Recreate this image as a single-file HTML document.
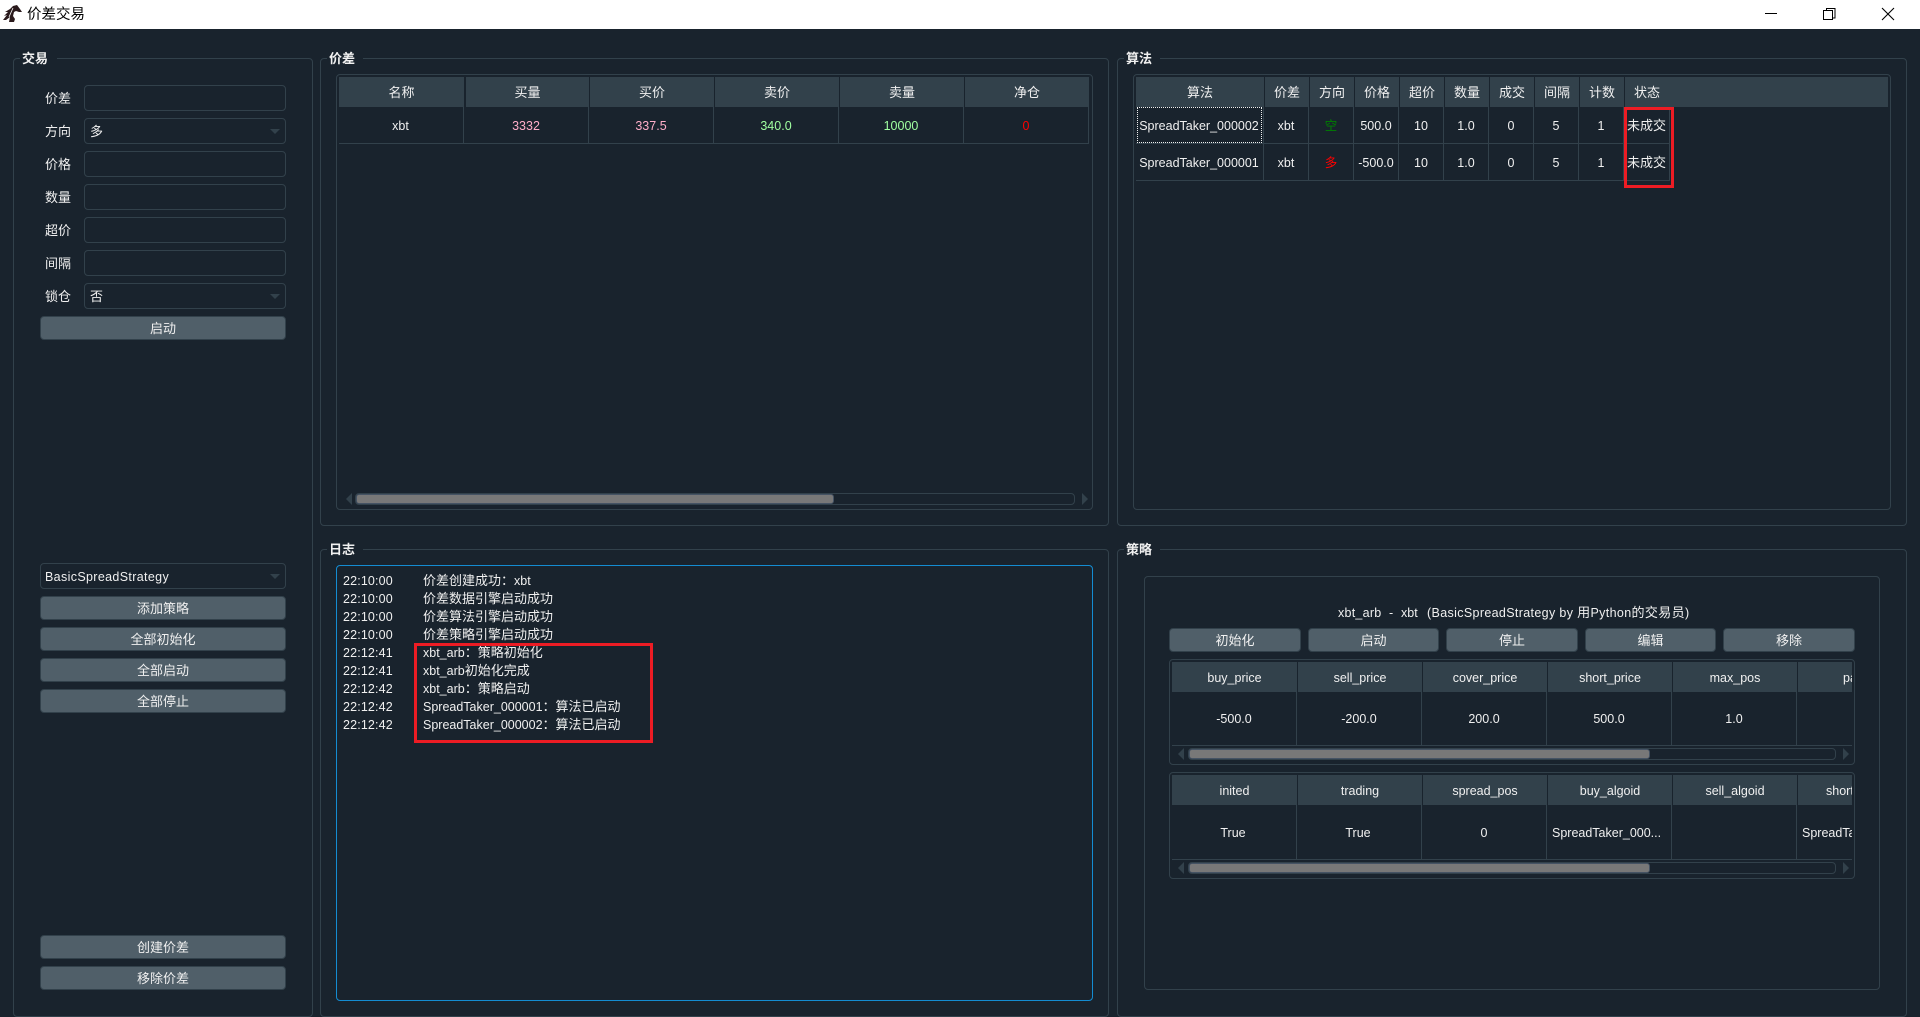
<!DOCTYPE html>
<html lang="zh-CN">
<head>
<meta charset="utf-8">
<title>价差交易</title>
<style>
*{box-sizing:border-box;margin:0;padding:0}
html,body{width:1920px;height:1017px;overflow:hidden;background:#19232D}
body{position:relative;font-family:"Liberation Sans","Noto Sans CJK SC",sans-serif;font-size:12.5px;color:#F0F0F0}
div{position:absolute}
em{font-style:normal;font-size:13px}
.bar{left:0;top:0;width:1920px;height:29px;background:#fff}
.wt{left:27px;top:5px;font-size:14.5px;line-height:21px;color:#000;white-space:nowrap}
.g{border:1px solid #32414B;border-radius:4px}
.gt{height:18px;line-height:20px;background:#19232D;font-weight:bold;font-size:13px;text-align:left;padding-left:2px;white-space:nowrap}
.f{border:1px solid #32414B;border-radius:4px}
.i{left:84px;width:202px;height:26px;border:1px solid #32414B;border-radius:4px;line-height:26px;padding-left:5px;font-size:13px}
.l{left:45px;height:26px;line-height:28px;white-space:nowrap;font-size:13px}
.a{width:0;height:0;border-left:5px solid transparent;border-right:5px solid transparent;border-top:5px solid #32414B}
.b{background:#505F69;border:1px solid #32414B;border-radius:4px;text-align:center;white-space:nowrap;font-size:13px;line-height:24px!important}
.h{background:#32414B;text-align:center;height:30px;line-height:32px;white-space:nowrap;overflow:hidden}
.k{font-size:13px}
.c{text-align:center;line-height:22px;height:22px;white-space:nowrap;overflow:hidden}
.v{width:1px;background:#32414B}
.o{height:1px;background:#32414B}
.st{border:1px solid #32414B;border-radius:4px}
.th{background:#787878;border:1px solid #455364;border-radius:3px}
.al{width:0;height:0;border-top:6px solid transparent;border-bottom:6px solid transparent;border-right:6px solid #32414B}
.ar{width:0;height:0;border-top:6px solid transparent;border-bottom:6px solid transparent;border-left:6px solid #32414B}
.lg{height:18px;line-height:20px;white-space:nowrap}
.lt{letter-spacing:.15px}
.red{border:3px solid #ED1C24;background:transparent}
</style>
</head>
<body>
<div class="bar"></div>
<svg style="position:absolute;left:0;top:3px" width="24" height="20" viewBox="0 0 24 20"><path d="M3 17 L7 12 L4 13 L8 9 L5 9 L10 6 L13 3 L17 2 L20 6 L22 9 L19 9 L16 8 L14 9 L13 13 L15 16 L14 19 L9 19 L10 14 L6 17 Z" fill="#2a1a1c"/><path d="M9 14 L13 5" stroke="#fff" stroke-width=".8" fill="none"/></svg>
<div class="wt">价差交易</div>
<svg style="position:absolute;left:1760px;top:4px" width="140" height="22" viewBox="0 0 140 22" fill="none" stroke="#000" stroke-width="1"><path d="M5 9.500H17"/><path d="M63.500 6.500h9v9h-9z M66.500 6.500v-2h8.500v9.500h-2.500"/><path d="M122 4L134 16M134 4L122 16" stroke-width="1.100"/></svg>

<!-- 交易 -->
<div class="g" style="left:13px;top:58px;width:300px;height:959px"></div>
<div class="gt" style="left:20px;top:49px;width:37px">交易</div>
<div class="l" style="top:85px">价差</div><div class="i" style="top:85px"></div>
<div class="l" style="top:118px">方向</div><div class="i" style="top:118px">多</div><div class="a" style="left:270px;top:129px"></div>
<div class="l" style="top:151px">价格</div><div class="i" style="top:151px"></div>
<div class="l" style="top:184px">数量</div><div class="i" style="top:184px"></div>
<div class="l" style="top:217px">超价</div><div class="i" style="top:217px"></div>
<div class="l" style="top:250px">间隔</div><div class="i" style="top:250px"></div>
<div class="l" style="top:283px">锁仓</div><div class="i" style="top:283px">否</div><div class="a" style="left:270px;top:294px"></div>
<div class="b" style="left:40px;top:316px;width:246px;height:24px">启动</div>
<div class="i" style="left:40px;width:246px;top:563px;padding-left:4px;font-size:12.5px;letter-spacing:.35px">BasicSpreadStrategy</div><div class="a" style="left:270px;top:574px"></div>
<div class="b" style="left:40px;top:596px;width:246px;height:24px">添加策略</div>
<div class="b" style="left:40px;top:627px;width:246px;height:24px">全部初始化</div>
<div class="b" style="left:40px;top:658px;width:246px;height:24px">全部启动</div>
<div class="b" style="left:40px;top:689px;width:246px;height:24px">全部停止</div>
<div class="b" style="left:40px;top:935px;width:246px;height:24px">创建价差</div>
<div class="b" style="left:40px;top:966px;width:246px;height:24px">移除价差</div>

<!-- 价差 -->
<div class="g" style="left:320px;top:58px;width:789px;height:468px"></div>
<div class="gt" style="left:327px;top:49px;width:36px">价差</div>
<div class="f" style="left:336px;top:74px;width:757px;height:436px"></div>
<div class="h k" style="left:339px;top:77px;width:125px">名称</div>
<div class="h k" style="left:466px;top:77px;width:123px">买量</div>
<div class="h k" style="left:590px;top:77px;width:124px">买价</div>
<div class="h k" style="left:715px;top:77px;width:124px">卖价</div>
<div class="h k" style="left:840px;top:77px;width:124px">卖量</div>
<div class="h k" style="left:965px;top:77px;width:124px">净仓</div>
<div class="v" style="left:463px;top:107px;height:36px"></div>
<div class="v" style="left:588px;top:107px;height:36px"></div>
<div class="v" style="left:713px;top:107px;height:36px"></div>
<div class="v" style="left:838px;top:107px;height:36px"></div>
<div class="v" style="left:963px;top:107px;height:36px"></div>
<div class="v" style="left:1088px;top:107px;height:36px"></div>
<div class="o" style="left:339px;top:143px;width:750px"></div>
<div class="c" style="left:339px;top:115px;width:123px">xbt</div>
<div class="c" style="left:464px;top:115px;width:124px;color:#FFAEC9">3332</div>
<div class="c" style="left:589px;top:115px;width:124px;color:#FFAEC9">337.5</div>
<div class="c" style="left:714px;top:115px;width:124px;color:#A0FFA0">340.0</div>
<div class="c" style="left:839px;top:115px;width:124px;color:#A0FFA0">10000</div>
<div class="c" style="left:964px;top:115px;width:124px;color:#FF0000">0</div>
<div class="al" style="left:346px;top:493px"></div>
<div class="st" style="left:355px;top:493px;width:720px;height:12px"></div>
<div class="th" style="left:356px;top:494px;width:478px;height:10px"></div>
<div class="ar" style="left:1082px;top:493px"></div>

<!-- 算法 -->
<div class="g" style="left:1117px;top:58px;width:790px;height:468px"></div>
<div class="gt" style="left:1124px;top:49px;width:36px">算法</div>
<div class="f" style="left:1133px;top:74px;width:758px;height:436px"></div>
<div class="h" style="left:1136px;top:77px;width:752px"></div>
<div class="h k" style="left:1136px;top:77px;width:128px;background:none">算法</div>
<div class="h k" style="left:1265px;top:77px;width:44px;background:none">价差</div>
<div class="h k" style="left:1310px;top:77px;width:44px;background:none">方向</div>
<div class="h k" style="left:1355px;top:77px;width:44px;background:none">价格</div>
<div class="h k" style="left:1400px;top:77px;width:44px;background:none">超价</div>
<div class="h k" style="left:1445px;top:77px;width:44px;background:none">数量</div>
<div class="h k" style="left:1490px;top:77px;width:44px;background:none">成交</div>
<div class="h k" style="left:1535px;top:77px;width:44px;background:none">间隔</div>
<div class="h k" style="left:1580px;top:77px;width:44px;background:none">计数</div>
<div class="h k" style="left:1625px;top:77px;width:44px;background:none">状态</div>
<div class="v" style="left:1264px;top:77px;height:30px;width:1px;background:#19232D"></div>
<div class="v" style="left:1309px;top:77px;height:30px;width:1px;background:#19232D"></div>
<div class="v" style="left:1354px;top:77px;height:30px;width:1px;background:#19232D"></div>
<div class="v" style="left:1399px;top:77px;height:30px;width:1px;background:#19232D"></div>
<div class="v" style="left:1444px;top:77px;height:30px;width:1px;background:#19232D"></div>
<div class="v" style="left:1489px;top:77px;height:30px;width:1px;background:#19232D"></div>
<div class="v" style="left:1534px;top:77px;height:30px;width:1px;background:#19232D"></div>
<div class="v" style="left:1579px;top:77px;height:30px;width:1px;background:#19232D"></div>
<div class="v" style="left:1624px;top:77px;height:30px;width:1px;background:#19232D"></div>
<div class="v" style="left:1263px;top:107px;height:73px"></div>
<div class="v" style="left:1308px;top:107px;height:73px"></div>
<div class="v" style="left:1353px;top:107px;height:73px"></div>
<div class="v" style="left:1398px;top:107px;height:73px"></div>
<div class="v" style="left:1443px;top:107px;height:73px"></div>
<div class="v" style="left:1488px;top:107px;height:73px"></div>
<div class="v" style="left:1533px;top:107px;height:73px"></div>
<div class="v" style="left:1578px;top:107px;height:73px"></div>
<div class="v" style="left:1623px;top:107px;height:73px"></div>
<div class="v" style="left:1669px;top:107px;height:73px"></div>
<div class="o" style="left:1136px;top:143px;width:534px"></div>
<div class="o" style="left:1136px;top:180px;width:534px"></div>
<div style="left:1137px;top:107px;width:125px;height:36px;border:1px dotted #F0F0F0"></div>
<div class="c" style="left:1136px;top:115px;width:126px">SpreadTaker_000002</div>
<div class="c" style="left:1264px;top:115px;width:44px">xbt</div>
<div class="c" style="left:1309px;top:115px;width:44px;color:#008000">空</div>
<div class="c" style="left:1354px;top:115px;width:44px">500.0</div>
<div class="c" style="left:1399px;top:115px;width:44px">10</div>
<div class="c" style="left:1444px;top:115px;width:44px">1.0</div>
<div class="c" style="left:1489px;top:115px;width:44px">0</div>
<div class="c" style="left:1534px;top:115px;width:44px">5</div>
<div class="c" style="left:1579px;top:115px;width:44px">1</div>
<div class="c k" style="left:1624px;top:115px;width:45px">未成交</div>
<div class="c" style="left:1136px;top:152px;width:126px">SpreadTaker_000001</div>
<div class="c" style="left:1264px;top:152px;width:44px">xbt</div>
<div class="c" style="left:1309px;top:152px;width:44px;color:#FF0000">多</div>
<div class="c" style="left:1354px;top:152px;width:44px">-500.0</div>
<div class="c" style="left:1399px;top:152px;width:44px">10</div>
<div class="c" style="left:1444px;top:152px;width:44px">1.0</div>
<div class="c" style="left:1489px;top:152px;width:44px">0</div>
<div class="c" style="left:1534px;top:152px;width:44px">5</div>
<div class="c" style="left:1579px;top:152px;width:44px">1</div>
<div class="c k" style="left:1624px;top:152px;width:45px">未成交</div>
<div class="red" style="left:1624px;top:107px;width:50px;height:81px"></div>

<!-- 日志 -->
<div class="g" style="left:320px;top:549px;width:789px;height:468px"></div>
<div class="gt" style="left:327px;top:540px;width:36px">日志</div>
<div style="left:336px;top:565px;width:757px;height:436px;border:1px solid #148CD2;border-radius:4px"></div>
<div class="lg lt" style="left:343px;top:571px">22:10:00</div><div class="lg" style="left:423px;top:571px"><em>价差创建成功：</em>xbt</div>
<div class="lg lt" style="left:343px;top:589px">22:10:00</div><div class="lg" style="left:423px;top:589px"><em>价差数据引擎启动成功</em></div>
<div class="lg lt" style="left:343px;top:607px">22:10:00</div><div class="lg" style="left:423px;top:607px"><em>价差算法引擎启动成功</em></div>
<div class="lg lt" style="left:343px;top:625px">22:10:00</div><div class="lg" style="left:423px;top:625px"><em>价差策略引擎启动成功</em></div>
<div class="lg lt" style="left:343px;top:643px">22:12:41</div><div class="lg" style="left:423px;top:643px">xbt_arb<em>：策略初始化</em></div>
<div class="lg lt" style="left:343px;top:661px">22:12:41</div><div class="lg" style="left:423px;top:661px">xbt_arb<em>初始化完成</em></div>
<div class="lg lt" style="left:343px;top:679px">22:12:42</div><div class="lg" style="left:423px;top:679px">xbt_arb<em>：策略启动</em></div>
<div class="lg lt" style="left:343px;top:697px">22:12:42</div><div class="lg" style="left:423px;top:697px">SpreadTaker_000001<em>：算法已启动</em></div>
<div class="lg lt" style="left:343px;top:715px">22:12:42</div><div class="lg" style="left:423px;top:715px">SpreadTaker_000002<em>：算法已启动</em></div>
<div class="red" style="left:414px;top:643px;width:239px;height:100px"></div>

<!-- 策略 -->
<div class="g" style="left:1117px;top:549px;width:790px;height:468px"></div>
<div class="gt" style="left:1124px;top:540px;width:36px">策略</div>
<div class="f" style="left:1144px;top:576px;width:736px;height:414px"></div>
<div class="c" style="left:1338px;top:602px;width:50px;overflow:visible;text-align:left;letter-spacing:.25px">xbt_arb</div>
<div class="c" style="left:1389px;top:602px;width:8px;overflow:visible;text-align:left">-</div>
<div class="c" style="left:1401px;top:602px;width:20px;overflow:visible;text-align:left">xbt</div>
<div class="c" style="left:1427px;top:602px;width:262px;overflow:visible;text-align:left;letter-spacing:.35px">(BasicSpreadStrategy by <em>用</em>Python<em>的交易员</em>)</div>
<div class="b" style="left:1169px;top:628px;width:132px;height:24px">初始化</div>
<div class="b" style="left:1308px;top:628px;width:131px;height:24px">启动</div>
<div class="b" style="left:1446px;top:628px;width:132px;height:24px">停止</div>
<div class="b" style="left:1585px;top:628px;width:131px;height:24px">编辑</div>
<div class="b" style="left:1723px;top:628px;width:132px;height:24px">移除</div>

<div class="f" style="left:1169px;top:659px;width:686px;height:106px"></div>
<div class="h" style="left:1172px;top:662px;width:125px">buy_price</div>
<div class="h" style="left:1298px;top:662px;width:124px">sell_price</div>
<div class="h" style="left:1423px;top:662px;width:124px">cover_price</div>
<div class="h" style="left:1548px;top:662px;width:124px">short_price</div>
<div class="h" style="left:1673px;top:662px;width:124px">max_pos</div>
<div class="h" style="left:1798px;top:662px;width:54px;text-align:left;padding-left:45px;overflow:hidden">pay_up</div>
<div class="v" style="left:1296px;top:692px;height:53px"></div>
<div class="v" style="left:1421px;top:692px;height:53px"></div>
<div class="v" style="left:1546px;top:692px;height:53px"></div>
<div class="v" style="left:1671px;top:692px;height:53px"></div>
<div class="v" style="left:1796px;top:692px;height:53px"></div>
<div class="o" style="left:1172px;top:745px;width:680px"></div>
<div class="c" style="left:1172px;top:708px;width:124px">-500.0</div>
<div class="c" style="left:1297px;top:708px;width:124px">-200.0</div>
<div class="c" style="left:1422px;top:708px;width:124px">200.0</div>
<div class="c" style="left:1547px;top:708px;width:124px">500.0</div>
<div class="c" style="left:1672px;top:708px;width:124px">1.0</div>
<div class="al" style="left:1178px;top:748px"></div>
<div class="st" style="left:1188px;top:748px;width:648px;height:12px"></div>
<div class="th" style="left:1189px;top:749px;width:461px;height:10px"></div>
<div class="ar" style="left:1843px;top:748px"></div>

<div class="f" style="left:1169px;top:772px;width:686px;height:107px"></div>
<div class="h" style="left:1172px;top:775px;width:125px">inited</div>
<div class="h" style="left:1298px;top:775px;width:124px">trading</div>
<div class="h" style="left:1423px;top:775px;width:124px">spread_pos</div>
<div class="h" style="left:1548px;top:775px;width:124px">buy_algoid</div>
<div class="h" style="left:1673px;top:775px;width:124px">sell_algoid</div>
<div class="h" style="left:1798px;top:775px;width:54px;text-align:left;padding-left:28px">short_algoid</div>
<div class="v" style="left:1296px;top:805px;height:54px"></div>
<div class="v" style="left:1421px;top:805px;height:54px"></div>
<div class="v" style="left:1546px;top:805px;height:54px"></div>
<div class="v" style="left:1671px;top:805px;height:54px"></div>
<div class="v" style="left:1796px;top:805px;height:54px"></div>
<div class="o" style="left:1172px;top:859px;width:680px"></div>
<div class="c" style="left:1172px;top:822px;width:122px">True</div>
<div class="c" style="left:1297px;top:822px;width:122px">True</div>
<div class="c" style="left:1422px;top:822px;width:124px">0</div>
<div class="c" style="left:1552px;top:822px;width:118px;text-align:left">SpreadTaker_000...</div>
<div class="c" style="left:1802px;top:822px;width:50px;text-align:left">SpreadTaker_000002</div>
<div class="al" style="left:1178px;top:862px"></div>
<div class="st" style="left:1188px;top:862px;width:648px;height:12px"></div>
<div class="th" style="left:1189px;top:863px;width:461px;height:10px"></div>
<div class="ar" style="left:1843px;top:862px"></div>
</body>
</html>
